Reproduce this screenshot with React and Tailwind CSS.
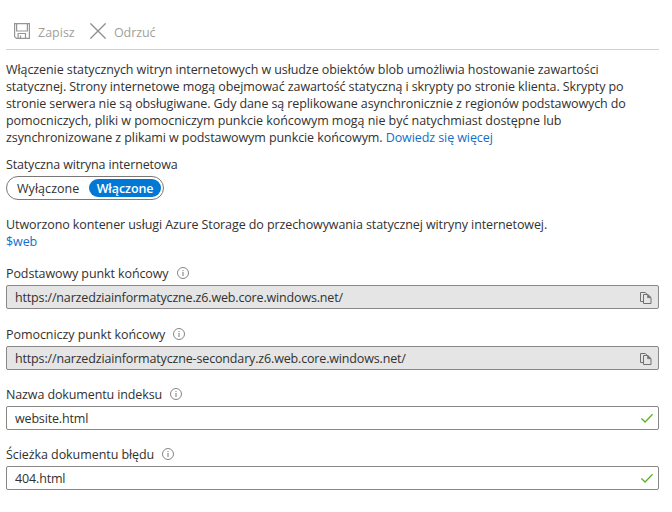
function SaveIcon() {
  return (
    <svg className="h-4 w-4" viewBox="0 0 16 16" fill="none" stroke="#979593" strokeWidth="1.2">
      <path d="M.6.6h14.8v14.8H2.4L.6 13.6z" />
      <path d="M2.6.6v7.4h10.8V.6M4.1 15.4v-4.9h7.4v4.9M6.5 12.5v2.9" />
    </svg>
  );
}

function DiscardIcon() {
  return (
    <svg className="h-4 w-4" viewBox="0 0 16 16" fill="none" stroke="#8f8d8b" strokeWidth="1.3">
      <path d="M.4.4l15.2 15.2M15.6.4L.4 15.6" />
    </svg>
  );
}

function InfoIcon() {
  return (
    <svg className="h-3 w-3" viewBox="0 0 12 12" fill="none" stroke="#7a7876">
      <circle cx="6" cy="6" r="5.5" strokeWidth=".9" />
      <path d="M6 5v4M6 3v1.1" strokeWidth="1" />
    </svg>
  );
}

function CopyIcon() {
  return (
    <svg className="mt-[2px] mr-[6px] h-3 w-3" viewBox="0 0 12 12" fill="none" stroke="#737170">
      <path d="M3.5 9.5h-3v-9h4.8l1.7 1.7" />
      <path d="M3.5 2.5h4.4l3.1 3.1v5.9H3.5z" />
      <path d="M7.5 2.5v3.2H11z" fill="#737170" strokeWidth=".6" />
    </svg>
  );
}

function CheckIcon() {
  return (
    <svg className="mr-[5px] h-3 w-3" viewBox="0 0 12 12" fill="none" stroke="#5db022" strokeWidth="1.3">
      <path d="M.4 6.4l3.7 3.6L11.6 2.3" />
    </svg>
  );
}

function Field({ label, labelClass, value, valueClass, readOnly, className }) {
  return (
    <div className={className}>
      <div className="flex h-5 items-center gap-2">
        <span className={labelClass}>{label}</span>
        <InfoIcon />
      </div>
      <div
        className={`mt-[2px] flex h-6 items-center justify-between rounded-[2px] border border-[#8a8886] pl-2 ${
          readOnly ? "bg-[#e5e5e5]" : "bg-white"
        }`}
      >
        <span className={valueClass}>{value}</span>
        {readOnly ? <CopyIcon /> : <CheckIcon />}
      </div>
    </div>
  );
}

export default function App() {
  return (
    <div className="h-[512px] w-[672px] overflow-hidden bg-white pl-[6px] pr-[13px] font-['Open_Sans','Noto_Sans',sans-serif] text-[12.5px] leading-[17px] whitespace-nowrap text-[#323130]">
      <div className="flex h-[50px] items-center border-b border-[#d2d0ce] pt-[13px] pl-2 text-[#a19f9d]">
        <SaveIcon />
        <span className="ml-2 w-[52px] pt-[2px]">Zapisz</span>
        <DiscardIcon />
        <span className="ml-2 pt-[2px] tracking-[-0.1px]">Odrzuć</span>
      </div>

      <div className="pt-[11px]">
        <div className="tracking-[-0.08px]">Włączenie statycznych witryn internetowych w usłudze obiektów blob umożliwia hostowanie zawartości</div>
        <div className="tracking-[-0.088px]">statycznej. Strony internetowe mogą obejmować zawartość statyczną i skrypty po stronie klienta. Skrypty po</div>
        <div className="tracking-[-0.1px]">stronie serwera nie są obsługiwane. Gdy dane są replikowane asynchronicznie z regionów podstawowych do</div>
        <div className="tracking-[-0.045px]">pomocniczych, pliki w pomocniczym punkcie końcowym mogą nie być natychmiast dostępne lub</div>
        <div className="tracking-[-0.085px]">
          zsynchronizowane z plikami w podstawowym punkcie końcowym.{" "}
          <a className="text-[#0f6fc9]">Dowiedz się więcej</a>
        </div>
      </div>

      <div className="mt-[10px] tracking-[-0.15px]">Statyczna witryna internetowa</div>
      <div className="mt-[3px] flex h-6 w-[158px] items-center rounded-full border border-[#7a7876] pr-[2px] pl-[10px]">
        <span className="w-[72px] tracking-[0.05px]">Wyłączone</span>
        <span className="flex h-[18px] flex-1 items-center justify-center rounded-full bg-[#0078d4] font-semibold tracking-[-0.1px] text-white">
          Włączone
        </span>
      </div>

      <div className="mt-4 tracking-[-0.09px]">
        Utworzono kontener usługi Azure Storage do przechowywania statycznej witryny internetowej.
      </div>
      <a className="block tracking-[-0.1px] text-[#0f6fc9]">$web</a>

      <Field
        className="mt-[13px]"
        label="Podstawowy punkt końcowy"
        labelClass="tracking-[-0.1px]"
        value="https://narzedziainformatyczne.z6.web.core.windows.net/"
        valueClass="tracking-[-0.16px]"
        readOnly
      />
      <Field
        className="mt-[15px]"
        label="Pomocniczy punkt końcowy"
        labelClass="tracking-[-0.06px]"
        value="https://narzedziainformatyczne-secondary.z6.web.core.windows.net/"
        valueClass="tracking-[-0.155px]"
        readOnly
      />
      <Field
        className="mt-[14px]"
        label="Nazwa dokumentu indeksu"
        labelClass="tracking-[-0.12px]"
        value="website.html"
        valueClass="tracking-[-0.16px]"
      />
      <Field
        className="mt-[14px]"
        label="Ścieżka dokumentu błędu"
        labelClass="tracking-[-0.07px]"
        value="404.html"
        valueClass="tracking-[-0.15px]"
      />
    </div>
  );
}
